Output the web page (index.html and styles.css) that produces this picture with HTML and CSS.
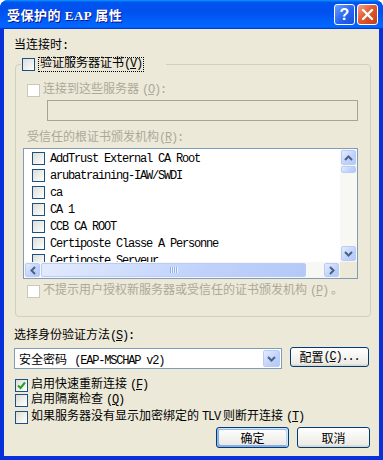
FILE: index.html
```html
<!DOCTYPE html>
<html lang="zh-CN">
<head>
    <meta charset="UTF-8">
    <title>受保护的 EAP 属性</title>
    <link rel="stylesheet" href="styles.css">
</head>
<body>
    <div class="window">
        <div class="titlebar">
            <span class="title">受保护的 EAP 属性</span>
            <div class="title-btns">
                <span class="tb help">?</span>
                <span class="tb close">
                    <svg width="13" height="13" viewBox="0 0 13 13"><path d="M2 2 L11 11 M11 2 L2 11" stroke="#fff" stroke-width="2.4" stroke-linecap="round"/></svg>
                </span>
            </div>
        </div>

        <div class="client">
            <div class="label">当连接时:</div>

            <fieldset class="group">
                <legend>
                    <span class="cb"></span>
                    <span class="focus">验证服务器证书<span class="en">(<u>V</u>)</span></span>
                </legend>

                <div class="row indent off"><span class="cb dis"></span>连接到这些服务器<span class="en">(<u>O</u>):</span></div>
                <div class="textbox"></div>

                <div class="label indent off sub">受信任的根证书颁发机构<span class="en">(<u>R</u>):</span></div>
                <div class="list">
                    <div class="items">
                        <div class="item"><span class="cb"></span>AddTrust External CA Root</div>
                        <div class="item"><span class="cb"></span>arubatraining-IAW/SWDI</div>
                        <div class="item"><span class="cb"></span>ca</div>
                        <div class="item"><span class="cb"></span>CA 1</div>
                        <div class="item"><span class="cb"></span>CCB CA ROOT</div>
                        <div class="item"><span class="cb"></span>Certiposte Classe A Personne</div>
                        <div class="item"><span class="cb"></span>Certiposte Serveur</div>
                    </div>
                    <div class="vscroll">
                        <span class="arrow"><svg width="9" height="6" viewBox="0 0 9 6"><path d="M1 5 L4.5 1.5 L8 5" fill="none" stroke="#4d6185" stroke-width="2"/></svg></span>
                        <span class="thumb vthumb"></span>
                        <span class="track"></span>
                        <span class="arrow"><svg width="9" height="6" viewBox="0 0 9 6"><path d="M1 1 L4.5 4.5 L8 1" fill="none" stroke="#4d6185" stroke-width="2"/></svg></span>
                    </div>
                    <div class="hscroll">
                        <span class="arrow"><svg width="6" height="9" viewBox="0 0 6 9"><path d="M5 1 L1.5 4.5 L5 8" fill="none" stroke="#4d6185" stroke-width="2"/></svg></span>
                        <span class="thumb hthumb"><span class="grip"></span></span>
                        <span class="track"></span>
                        <span class="arrow"><svg width="6" height="9" viewBox="0 0 6 9"><path d="M1 1 L4.5 4.5 L1 8" fill="none" stroke="#4d6185" stroke-width="2"/></svg></span>
                    </div>
                    <div class="corner"></div>
                </div>

                <div class="row indent off low"><span class="cb dis"></span>不提示用户授权新服务器或受信任的证书颁发机构<span class="en">(<u>P</u>)</span>。</div>
            </fieldset>

            <div class="label method">选择身份验证方法<span class="en">(<u>S</u>):</span></div>
            <div class="method-row">
                <div class="combo">
                    <span class="combo-text">安全密码 <span class="en">(EAP-MSCHAP v2)</span></span>
                    <span class="drop"><svg width="9" height="6" viewBox="0 0 9 6"><path d="M1 1 L4.5 4.5 L8 1" fill="none" stroke="#4d6185" stroke-width="2"/></svg></span>
                </div>
                <button class="btn config">配置<span class="en">(<u>C</u>)...</span></button>
            </div>

            <div class="row opt first"><span class="cb on"><svg width="9" height="9" viewBox="0 0 9 9"><path d="M1 4.5 L3.5 7 L8 1.5" fill="none" stroke="#21a121" stroke-width="2"/></svg></span>启用快速重新连接<span class="en">(<u>F</u>)</span></div>
            <div class="row opt second"><span class="cb"></span>启用隔离检查<span class="en">(<u>Q</u>)</span></div>
            <div class="row opt third"><span class="cb"></span>如果服务器没有显示加密绑定的 <span class="en">TLV</span> 则断开连接<span class="en">(<u>T</u>)</span></div>

            <div class="actions">
                <button class="btn default">确定</button>
                <button class="btn">取消</button>
            </div>
        </div>
    </div>
</body>
</html>
```

FILE: styles.css
```css
* {
    box-sizing: border-box;
}
html, body {
    margin: 0;
    padding: 0;
    background: #fff;
}
body {
    font: 12px "Liberation Mono", "Noto Sans CJK SC", monospace;
    color: #000;
}
u {
    text-decoration: underline;
}
.en {
    letter-spacing: -1.2px;
}

/* window frame */
.window {
    width: 383px;
    height: 460px;
    background: #0831d9;
    border-radius: 8px 8px 0 0;
    display: flex;
    flex-direction: column;
    overflow: hidden;
}
.titlebar {
    height: 29px;
    flex: none;
    display: flex;
    align-items: center;
    padding: 0 5px 0 7px;
    background: linear-gradient(180deg, #0997ff, #0053ee 8%, #0050ee 40%, #06f 88%, #06f 93%, #005bff 95%, #003dd7 96%, #003dd7);
}
.title {
    flex: 1;
    color: #fff;
    font: bold 13px "Liberation Serif", "Noto Sans CJK SC", serif;
    letter-spacing: 0.5px;
    text-shadow: 1px 1px #0f1089;
}
.title-btns {
    display: flex;
    gap: 2px;
}
.tb {
    width: 21px;
    height: 21px;
    border: 1px solid #fff;
    border-radius: 3px;
    display: flex;
    align-items: center;
    justify-content: center;
}
.help {
    background: linear-gradient(135deg, #6ea0fa, #2563ef 55%, #1a50da);
    color: #fff;
    font: bold 16px "Liberation Sans", sans-serif;
}
.close {
    background: linear-gradient(135deg, #f3a38c, #e35a2e 45%, #c43c17);
}

.client {
    flex: 1;
    margin: 0 4px 4px 4px;
    background: #ece9d8;
    padding: 10px 0 0 10px;
}
.label {
    line-height: 14px;
    height: 14px;
}
.off {
    color: #aca899;
}

/* checkboxes */
.cb {
    width: 13px;
    height: 13px;
    flex: none;
    border: 1px solid #1c5180;
    background: linear-gradient(135deg, #dcdcd7, #fff);
    display: inline-flex;
    align-items: center;
    justify-content: center;
}
.cb.dis {
    border-color: #cac8bb;
    background: #fff;
}
.row {
    display: flex;
    align-items: center;
    gap: 3px;
    height: 13px;
    line-height: 13px;
    white-space: nowrap;
}

/* group box */
.group {
    margin: 4px 0 0 1px;
    padding: 0 0 18px;
    width: 356px;
    border: 1px solid #d0d0bf;
    border-radius: 4px;
    min-width: 0;
}
.group legend {
    display: flex;
    align-items: center;
    gap: 3px;
    height: 15px;
    margin-left: 5px;
    padding: 0 22px 0 1px;
    line-height: 13px;
}
.focus {
    border: 1px dotted #000;
    padding: 0 1px;
}
.indent {
    margin-left: 11px;
}
.group > .row:first-of-type {
    margin-top: 12px;
}
.textbox {
    margin: 3px 0 0 31px;
    width: 311px;
    height: 21px;
    border: 1px solid #a5a49c;
    background: #ece9d8;
}
.sub {
    margin-top: 10px;
}
.low {
    margin-top: 6px;
}

/* list view */
.list {
    margin: 3px 0 0 7px;
    width: 335px;
    height: 131px;
    border: 1px solid #7f9db9;
    background: #fff;
    display: grid;
    grid-template-columns: 1fr 17px;
    grid-template-rows: 1fr 16px;
}
.items {
    padding: 1px 0 0 8px;
    overflow: hidden;
}
.item {
    display: flex;
    align-items: center;
    gap: 5px;
    height: 17px;
    white-space: nowrap;
    letter-spacing: -1.2px;
}
.vscroll, .hscroll {
    background: #f7f7f3;
    display: flex;
    padding: 1px;
    gap: 1px;
}
.vscroll {
    flex-direction: column;
}
.arrow, .thumb, .drop {
    flex: none;
    border: 1px solid #b9cbf6;
    border-radius: 2px;
    background: linear-gradient(135deg, #e3ebfe, #c0d2fb 60%, #b4c8f8);
    display: flex;
    align-items: center;
    justify-content: center;
}
.vscroll .arrow {
    height: 15px;
}
.hscroll .arrow {
    width: 15px;
}
.track {
    flex: 1;
}
.vthumb {
    height: 7px;
}
.hthumb {
    width: 265px;
}
.grip {
    width: 8px;
    height: 6px;
    background: repeating-linear-gradient(90deg, #8fb0f5 0 1px, #eef3fe 1px 2px);
}
.corner {
    background: #ece9d8;
}

/* method */
.method {
    margin-top: 12px;
}
.method-row {
    display: flex;
    align-items: flex-start;
    gap: 8px;
    margin-top: 5px;
}
.combo {
    width: 268px;
    height: 21px;
    border: 1px solid #7f9db9;
    background: #fff;
    display: flex;
    align-items: center;
    padding: 1px 1px 1px 4px;
}
.combo-text {
    flex: 1;
    white-space: nowrap;
}
.drop {
    width: 17px;
    height: 17px;
}

/* buttons */
.btn {
    font: 12px "Liberation Mono", "Noto Sans CJK SC", monospace;
    color: #000;
    border: 1px solid #003c74;
    border-radius: 3px;
    background: linear-gradient(180deg, #fff, #ecebe6 86%, #d6d0c5);
    padding: 0;
    display: flex;
    align-items: center;
    justify-content: center;
}
.config {
    width: 79px;
    height: 20px;
    margin-top: -1px;
}
.default {
    box-shadow: inset -1px 1px #cee7ff, inset 1px 2px #98b8ea, inset -2px 2px #bcd4f6, inset 1px -1px #89ade4, inset 2px -2px #89ade4;
}

.opt {
    margin-left: 1px;
}
.first {
    margin-top: 10px;
}
.second {
    margin-top: 2px;
}
.third {
    margin-top: 4px;
}
.actions {
    display: flex;
    justify-content: flex-end;
    gap: 8px;
    padding-right: 9px;
    margin-top: 3px;
}
.actions .btn {
    width: 73px;
    height: 21px;
}
```
